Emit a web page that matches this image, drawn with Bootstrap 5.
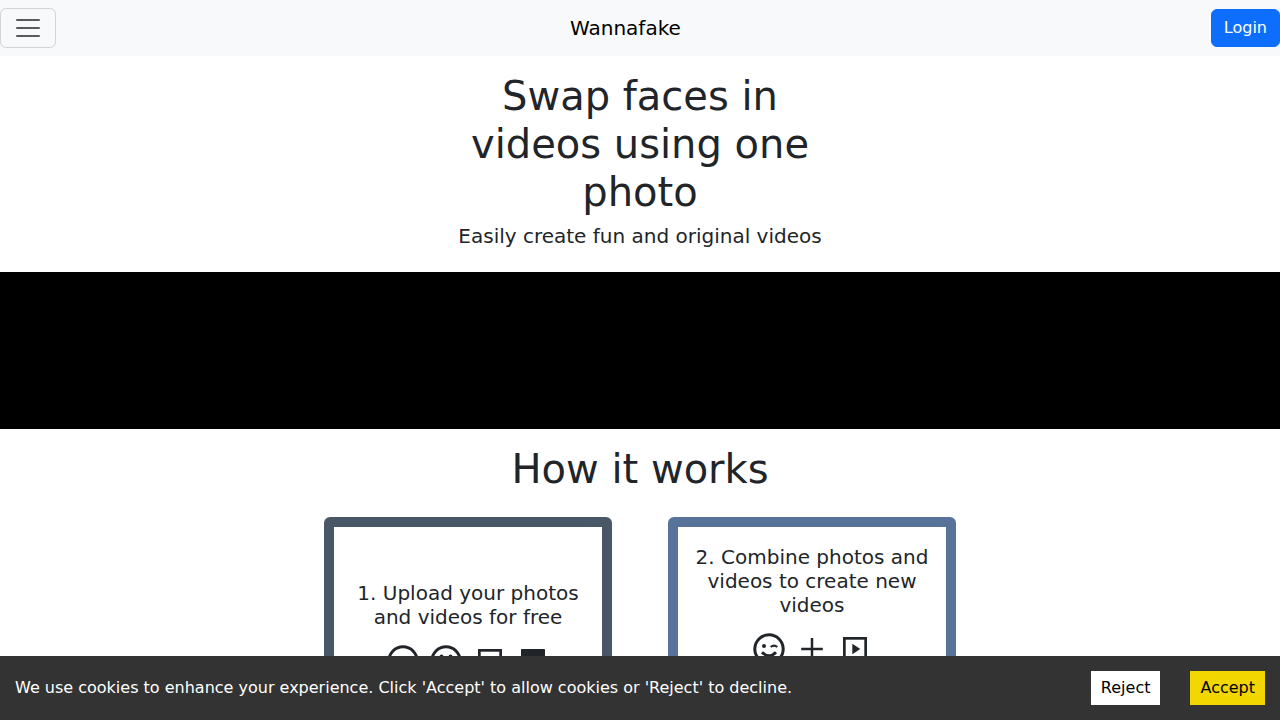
<!DOCTYPE html>
<html lang="en">
<head>
<meta charset="utf-8">
<meta name="viewport" content="width=device-width, initial-scale=1">
<title>Wannafake</title>
<link href="https://cdn.jsdelivr.net/npm/bootstrap@5.3.0/dist/css/bootstrap.min.css" rel="stylesheet">
<style>
body { font-family: "DejaVu Sans", sans-serif; height: 100vh; overflow: hidden; }
h1 { font-size: 40px; }
.top-bar { height: 56px; }
.hero { width: 384px; }
.hero p, .step p { font-size: 20px; line-height: 24px; }
.video-band { height: 157px; background: #000; }
.steps { gap: 56px; }
.step { width: 288px; height: 288px; border: 10px solid; border-radius: 6px; }
.step-upload { border-color: #495867; padding-top: 54px; }
.step-combine { border-color: #577399; padding-top: 18px; }
.step svg { width: 32px; height: 32px; display: block; }
.icon-row { gap: 11.3px; }
.cookie-bar { background: #333; height: 64px; padding: 0 15px; gap: 30px; }
.cookie-bar button { border: 0; padding: 5px 10px; height: 34px; color: #000; }
.cookie-accept { background: #f1d600; }
</style>
</head>
<body>
<nav class="navbar navbar-light bg-light p-0 top-bar">
  <div class="container-fluid p-0">
    <button class="navbar-toggler" type="button" aria-label="Menu"><span class="navbar-toggler-icon"></span></button>
    <a class="navbar-brand" href="#">Wannafake</a>
    <a class="btn btn-primary" href="#">Login</a>
  </div>
</nav>
<header class="hero mx-auto text-center pt-3 pb-4">
  <h1 class="mb-2">Swap faces in videos using one photo</h1>
  <p class="mb-0">Easily create fun and original videos</p>
</header>
<div class="video-band"></div>
<main class="text-center pt-3">
  <h1 class="mb-4">How it works</h1>
  <div class="steps d-flex justify-content-center">
    <section class="step step-upload">
      <p class="mb-3 px-3">1. Upload your photos and videos for free</p>
      <div class="icon-row d-flex justify-content-center">
        <svg viewBox="0 0 32 32" fill="none" stroke="#212529" stroke-width="3"><circle cx="16" cy="16" r="14.2"/><path d="M10 20h12"/></svg>
        <svg viewBox="0 0 32 32" fill="none" stroke="#212529" stroke-width="3"><circle cx="16" cy="16" r="14.2"/><circle cx="11.5" cy="11.5" r="2" fill="#212529" stroke="none"/><circle cx="20.5" cy="11.5" r="2" fill="#212529" stroke="none"/><path d="M9 19q7 8 14 0"/></svg>
        <svg viewBox="0 0 32 32" fill="none" stroke="#212529" stroke-width="2.7"><rect x="5.35" y="5.35" width="21.3" height="21.3"/></svg>
        <svg viewBox="0 0 32 32" fill="#212529"><rect x="4" y="4" width="24" height="24" rx=".8"/></svg>
      </div>
    </section>
    <section class="step step-combine">
      <p class="mb-3 px-3">2. Combine photos and videos to create new videos</p>
      <div class="icon-row d-flex justify-content-center">
        <svg viewBox="0 0 32 32" fill="none" stroke="#212529" stroke-width="3"><circle cx="16" cy="16" r="14.2"/><circle cx="11" cy="13" r="2" fill="#212529" stroke="none"/><path d="M17.7 14.1q3.3-2.9 6.6 0" stroke-width="2"/><path d="M9 19.3q7 7 14 0"/></svg>
        <svg viewBox="0 0 32 32" fill="none" stroke="#212529" stroke-width="2.5"><path d="M16 5v22M5.2 16h21.6"/></svg>
        <svg viewBox="0 0 32 32" fill="none" stroke="#212529" stroke-width="2.7"><rect x="5.35" y="5.35" width="21.3" height="21.3"/><path d="M13.3 10.7v10.6l8-5.3z" fill="#212529" stroke="none"/></svg>
      </div>
    </section>
  </div>
</main>
<div class="cookie-bar fixed-bottom d-flex align-items-center text-white">
  <span class="me-auto">We use cookies to enhance your experience. Click 'Accept' to allow cookies or 'Reject' to decline.</span>
  <button class="bg-white" type="button">Reject</button>
  <button class="cookie-accept" type="button">Accept</button>
</div>
<script src="https://cdn.jsdelivr.net/npm/bootstrap@5.3.0/dist/js/bootstrap.bundle.min.js"></script>
</body>
</html>
